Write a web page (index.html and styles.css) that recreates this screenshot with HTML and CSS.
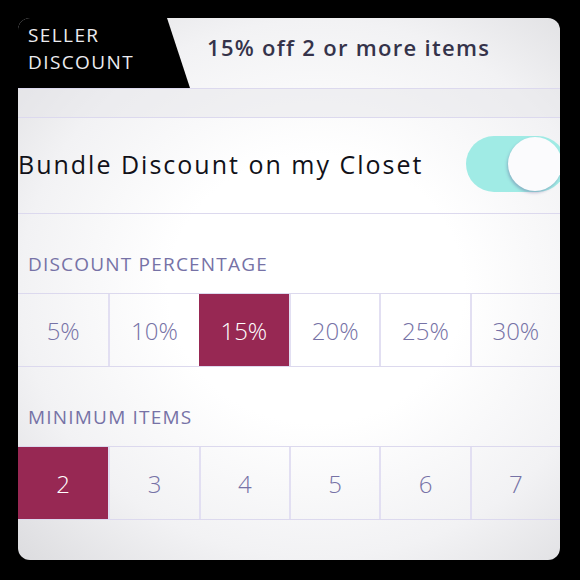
FILE: index.html
```html
<!DOCTYPE html>
<html lang="en">
<head>
    <meta charset="UTF-8">
    <meta name="viewport" content="width=device-width, initial-scale=1.0">
    <title>Seller Discount</title>
    <link rel="stylesheet" href="styles.css">
</head>
<body>
    <div class="card">
        <div class="header">
            <div class="tab">SELLER<br>DISCOUNT</div>
            <div class="summary">15% off 2 or more items</div>
        </div>
        <div class="spacer"></div>

        <div class="bundle">
            <span class="bundle-label">Bundle Discount on my Closet</span>
            <div class="toggle"><div class="knob"></div></div>
        </div>

        <div class="section-label">DISCOUNT PERCENTAGE</div>
        <div class="options">
            <div class="option">5%</div>
            <div class="option">10%</div>
            <div class="option selected">15%</div>
            <div class="option">20%</div>
            <div class="option">25%</div>
            <div class="option">30%</div>
        </div>

        <div class="section-label">MINIMUM ITEMS</div>
        <div class="options">
            <div class="option selected">2</div>
            <div class="option">3</div>
            <div class="option">4</div>
            <div class="option">5</div>
            <div class="option">6</div>
            <div class="option">7</div>
        </div>
    </div>
</body>
</html>
```

FILE: styles.css
```css
body {
    margin: 0;
    background-color: #000;
    font-family: "Open Sans", Lato, sans-serif;
}

.card {
    margin: 18px;
    width: 542px;
    height: 542px;
    border-radius: 12px;
    overflow: hidden;
    background: radial-gradient(ellipse at 55% 50%, #ffffff 35%, #f2f2f4 70%, #dcdcdf 100%);
}

.header {
    display: flex;
    align-items: center;
    height: 70px;
    border-bottom: 1px solid #dcd9ee;
}

/* black label with the slanted right edge */
.tab {
    width: 172px;
    height: 70px;
    padding: 4px 0 0 10px;
    box-sizing: border-box;
    background-color: #000;
    clip-path: polygon(0 0, 149px 0, 172px 70px, 0 70px);
    color: #ececf0;
    font-size: 19px;
    line-height: 27px;
    letter-spacing: 1.4px;
}

.summary {
    margin-left: 17px;
    font-size: 22px;
    font-weight: 600;
    color: #35334a;
    letter-spacing: 1.3px;
    padding-bottom: 13px;
}

.spacer {
    height: 28px;
    border-bottom: 1px solid #dcd9ee;
    background-color: rgba(230, 230, 234, 0.5);
}

.bundle {
    display: flex;
    align-items: center;
    justify-content: space-between;
    height: 95px;
    border-bottom: 1px solid #dcd9ee;
}

.bundle-label {
    font-size: 25px;
    color: #111118;
    letter-spacing: 2px;
    padding-bottom: 3px;
}

.toggle {
    position: relative;
    width: 100px;
    height: 56px;
    margin-right: -6px;
    margin-bottom: 4px;
    border-radius: 28px;
    background-color: #a0ebe5;
}

.knob {
    position: absolute;
    top: 1px;
    right: 4px;
    width: 54px;
    height: 54px;
    border-radius: 50%;
    background-color: #fbfbfd;
    box-shadow: -1px 2px 3px rgba(90, 80, 140, 0.35);
}

.section-label {
    height: 79px;
    box-sizing: border-box;
    padding: 37px 0 0 10px;
    font-size: 19px;
    letter-spacing: 1.2px;
    color: #7672a6;
}

.options {
    display: grid;
    grid-template-columns: repeat(6, 1fr);
    height: 72px;
    border-top: 1px solid #dcd9ee;
    border-bottom: 1px solid #dcd9ee;
}

.option {
    display: flex;
    align-items: center;
    justify-content: center;
    border-left: 2px solid #e2dff2;
    font-size: 24px;
    font-weight: 300;
    color: #7672a6;
}

.option:first-child {
    border-left: none;
}

.option.selected {
    background-color: #972853;
    color: #fff;
    border-left: none;
}
```
